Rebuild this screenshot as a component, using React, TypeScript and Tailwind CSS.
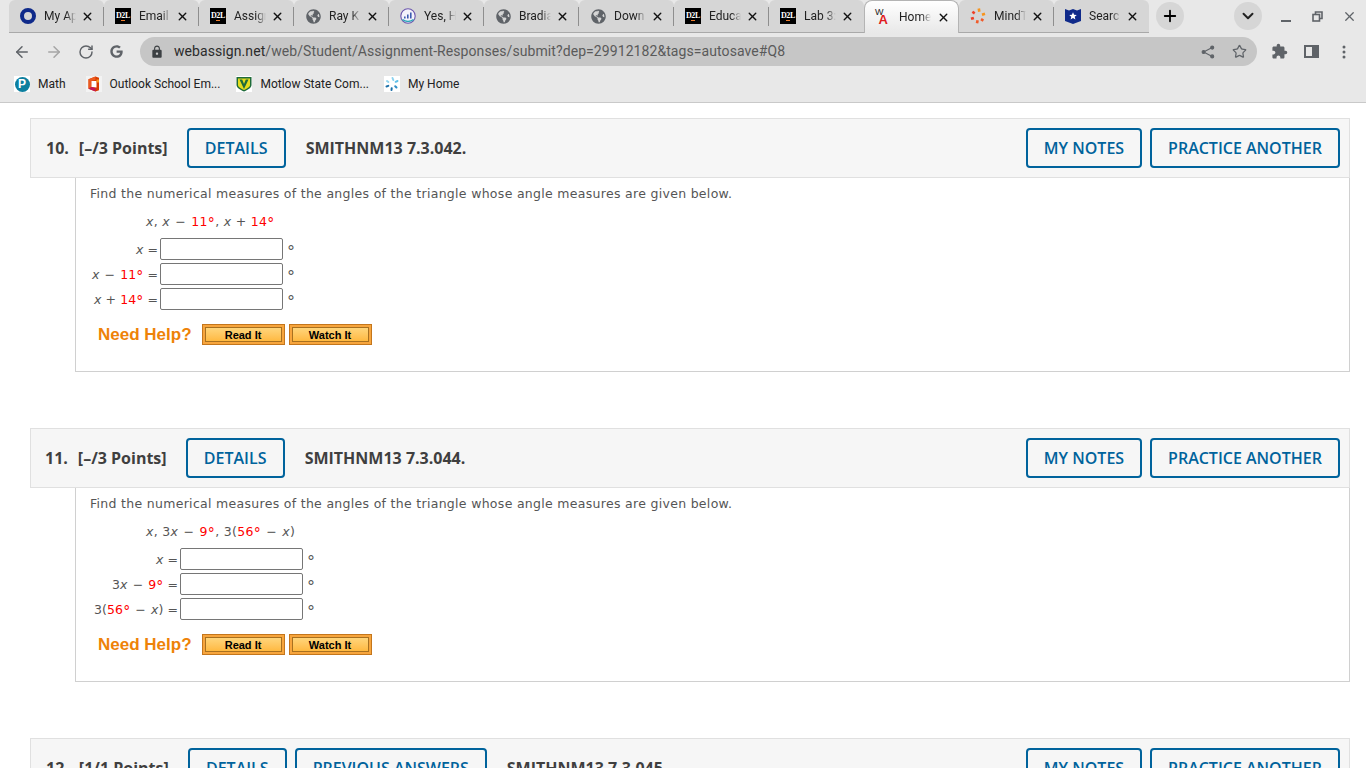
import React from "react";
import { ArrowLeft, ArrowRight, RotateCw, Star, X, Plus, ChevronDown } from "lucide-react";
import { MdLock, MdExtension } from "react-icons/md";
import { FaGlobeAmericas, FaGoogle } from "react-icons/fa";

const D2L = () => (
  <span className="flex h-4 w-4 flex-col items-center justify-center bg-black font-['Liberation_Serif',serif] text-[8px] font-bold leading-[8px] tracking-[-0.3px] text-white">
    D2L
    <span className="h-px w-[4px] bg-[#e8792b]" />
  </span>
);
const Globe = () => <FaGlobeAmericas className="h-[15px] w-[15px] text-[#5f6368]" />;
const Ring = () => <span className="h-4 w-4 rounded-full border-[4px] border-[#0f2a8a]" />;
const Chart = () => (
  <svg width="16" height="16" viewBox="0 0 16 16">
    <circle cx="8" cy="8" r="7.2" fill="#f4f2fb" stroke="#6a55ad" strokeWidth="1.1" />
    <path d="M4 10.500V8.500h1.600v2zM7 10.500V6.500h1.600v4zM10 10.500V4.500h1.600v6z" fill="#3c5bb0" />
    <path d="M2.500 11.500c3 2.600 8 2.600 11 0" stroke="#2aa7b8" strokeWidth="1.400" fill="none" />
  </svg>
);
const WA = () => (
  <span className="flex h-4 w-4 items-start font-['Liberation_Sans',sans-serif] leading-none">
    <span className="-mt-[1px] text-[9px] text-[#222]">W</span>
    <span className="-ml-[5px] mt-[4px] text-[13px] font-bold text-[#e01b22]">A</span>
  </span>
);
const Mind = () => (
  <svg width="16" height="16" viewBox="0 0 16 16" fill="none" strokeWidth="2.600" strokeLinecap="butt">
    <path d="M8.800 0.500l.5 3.200" stroke="#f7941d" />
    <path d="M15 5.800l-3 1" stroke="#f7941d" />
    <path d="M13.400 12.600l-2.400-1.500" stroke="#f15a29" />
    <path d="M7 15.200l.6-2.900" stroke="#f15a29" />
    <path d="M1 10.800l2.900-.9" stroke="#ee3f24" />
    <path d="M2.400 3.800l2.300 1.600" stroke="#ee3f24" />
  </svg>
);
const Shield = () => (
  <svg width="16" height="16" viewBox="0 0 16 16">
    <path d="M0 1l4 1.400L8 1l4 1.400L16 1v12l-8 3-8-3z" fill="#0f2a8a" />
    <path d="M8 4.200l1.100 2.500 2.700.2-2.100 1.800.7 2.700L8 9.900 5.600 11.400l.7-2.700-2.100-1.800 2.700-.2z" fill="#fff" />
  </svg>
);

const tabs: { t: string; i: React.ReactNode }[] = [
  { t: "My App", i: <Ring /> },
  { t: "Email", i: <D2L /> },
  { t: "Assign", i: <D2L /> },
  { t: "Ray K", i: <Globe /> },
  { t: "Yes, H", i: <Chart /> },
  { t: "Bradia", i: <Globe /> },
  { t: "Down", i: <Globe /> },
  { t: "Educa", i: <D2L /> },
  { t: "Lab 3:", i: <D2L /> },
  { t: "Home", i: <WA /> },
  { t: "MindT", i: <Mind /> },
  { t: "Searc", i: <Shield /> },
];

function Tab({ t, i, active, sep }: { t: string; i: React.ReactNode; active: boolean; sep: boolean }) {
  return (
    <div
      className={
        active
          ? "flex h-[33px] w-[95px] shrink-0 items-center rounded-t-[8px] border-x border-t border-[#b4b4b4] bg-gradient-to-b from-white to-[#e8e8e8] pl-[10px]"
          : "flex h-[33px] w-[95px] shrink-0 items-center rounded-t-[6px] border-b border-[#a9a9a9] bg-[#d6d6d6] pl-[11px]"
      }
    >
      <span className="flex h-4 w-4 shrink-0 items-center justify-center">{i}</span>
      <span className="ml-2 w-[32px] shrink-0 overflow-hidden whitespace-nowrap text-[12px] text-[#222] [mask-image:linear-gradient(90deg,#000_70%,transparent)]">
        {t}
      </span>
      <X className={`${active ? "ml-[6px]" : "ml-[5px]"} h-[13px] w-[13px] shrink-0 text-[#111]`} strokeWidth={2.6} />
      {sep && <span className="ml-[9px] h-[19px] w-px shrink-0 bg-[#8e8e8e]" />}
    </div>
  );
}

const Pearson = () => (
  <span className="flex h-4 w-4 items-center justify-center bg-white">
    <span className="flex h-[15px] w-[15px] items-center justify-center rounded-full bg-[#0d7f9f] font-['Liberation_Sans',sans-serif] text-[12px] font-bold leading-none text-white">P</span>
  </span>
);
const Office = () => (
  <svg width="16" height="16" viewBox="0 0 16 16">
    <rect width="16" height="16" fill="#f3f3f3" />
    <path d="M9.500 0.500L2.500 3.200v9.600L9.500 15.500l3.500-1.200V1.700z" fill="#d83b01" />
    <path d="M2.500 3.200L9.500 0.500v3.500L5.500 5v6l-3 1.800z" fill="#eb5a1f" />
    <path d="M5.500 5h5v6.500l-5-.5z" fill="#fff" />
    <path d="M9.500 15.500L2.500 12.800l3-1.800 4 1z" fill="#c2185b" />
    <path d="M10.500 3.500H13v3h-2.500z" fill="#f7931e" />
  </svg>
);
const Motlow = () => (
  <svg width="16" height="16" viewBox="0 0 16 16">
    <rect width="16" height="16" fill="#fff" />
    <path d="M0.500 1h15v8c0 3-4 5-7.500 6.500C4.500 14 0.500 12 0.500 9z" fill="#1f6b3a" />
    <path d="M2 2.500h12v6.500c0 2-3 3.700-6 5-3-1.300-6-3-6-5z" fill="#e4dc1c" />
    <path d="M3.500 3.500h2.700L8 8l1.800-4.500h2.700L8 13z" fill="#1f6b3a" />
  </svg>
);
const MyHome = () => (
  <svg width="16" height="16" viewBox="0 0 16 16" fill="none" strokeWidth="2" strokeLinecap="round">
    <rect width="16" height="16" fill="#fff" />
    <path d="M8.500 2l.8 2" stroke="#8ed3ef" />
    <path d="M13.500 5l-1.800.8" stroke="#5fbfe8" />
    <path d="M12.500 11.500l-1.300-1.300" stroke="#2f8fc8" />
    <path d="M7.500 14l.2-1.800" stroke="#1c6fa8" />
    <path d="M2.500 10.500l1.800-.6" stroke="#1c6fa8" />
    <path d="M3 5l1.400 1" stroke="#8ed3ef" />
  </svg>
);

function Bookmark({ icon, label, cls }: { icon: React.ReactNode; label: string; cls: string }) {
  return (
    <div className={`flex items-center ${cls}`}>
      <span className="flex h-4 w-4 items-center justify-center">{icon}</span>
      <span className="ml-2 whitespace-nowrap text-[12px] text-[#222]">{label}</span>
    </div>
  );
}

const Btn = ({ children, cls = "" }: { children: React.ReactNode; cls?: string }) => (
  <div className={`flex h-10 shrink-0 items-center justify-center rounded-[4px] border-2 border-[#00639c] text-[16px] font-semibold text-[#00639c] ${cls}`}>
    {children}
  </div>
);

const R = ({ children }: { children: React.ReactNode }) => <span className="text-[#f00]">{children}</span>;
const V = () => <i>x</i>;
const D = () => <span className="align-[-2px] text-[14px] leading-[0]">°</span>;
const M = () => <span className="mx-[1px]">−</span>;

function Header({ n, pts, code, prev = false, numCls = "" }: { n: string; pts: string; code: string; prev?: boolean; numCls?: string }) {
  return (
    <div className="flex h-[60px] items-center border border-[#e0e0e0] bg-[#f6f6f6] pl-[15px] pr-[9px] font-['Open_Sans',sans-serif] text-[#3f3f3f]">
      <span className={`-mt-px text-[16px] font-bold ${numCls}`}>{n}</span>
      <span className="ml-[10px] text-[16px] font-bold">{pts}</span>
      <Btn cls="ml-[19px] w-[99px]">DETAILS</Btn>
      {prev && <Btn cls="ml-2 w-[192px]">PREVIOUS ANSWERS</Btn>}
      <span className="ml-5 text-[16px] font-bold">{code}</span>
      <div className="ml-auto flex gap-2">
        <Btn cls="w-[116px]">MY NOTES</Btn>
        <Btn cls="w-[190px]">PRACTICE ANOTHER</Btn>
      </div>
    </div>
  );
}

function HelpBtn({ children }: { children: React.ReactNode }) {
  return (
    <div className="h-[21px] w-[83px] border border-[#c4761c] bg-[#f7a53d] p-[2px]">
      <div className="flex h-[15px] items-center justify-center border border-[#a8701f] bg-gradient-to-b from-[#ffd57a] to-[#ffb93f] pt-px font-['Liberation_Sans',sans-serif] text-[11px] font-bold leading-none text-black">
        {children}
      </div>
    </div>
  );
}

function Question({ head, rows, gridCls }: { head: React.ReactNode; rows: React.ReactNode[]; gridCls: string }) {
  return (
    <div className="ml-[45px] h-[194px] border-x border-b border-[#d0d0d0] pl-[14px] pt-[8px] font-['DejaVu_Sans',sans-serif] text-[12.5px] leading-[16px] tracking-[0.3px] text-[#555]">
      <p>Find the numerical measures of the angles of the triangle whose angle measures are given below.</p>
      <p className="ml-[56px] mt-[12px]">{head}</p>
      <div className={`mt-[8px] grid w-fit grid-cols-[auto_auto_auto] items-center gap-y-[3px] ${gridCls}`}>
        {rows.map((r, i) => (
          <React.Fragment key={i}>
            <span className="whitespace-nowrap pr-[2px] pt-[2px] text-right tracking-[0.1px]">{r}</span>
            <span className="h-[22px] w-[123px] rounded-[2px] border border-[#767676] bg-white" />
            <span className="ml-[4px] mt-[6px] text-[16px] leading-none">°</span>
          </React.Fragment>
        ))}
      </div>
      <div className="ml-[8px] mt-[14px] flex items-center">
        <span className="font-['Liberation_Sans',sans-serif] text-[17px] font-bold tracking-normal text-[#ee8208]">Need Help?</span>
        <span className="ml-[10px] flex gap-1 tracking-normal">
          <HelpBtn>Read It</HelpBtn>
          <HelpBtn>Watch It</HelpBtn>
        </span>
      </div>
    </div>
  );
}

export default function App() {
  return (
    <div className="h-[768px] w-[1366px] overflow-hidden bg-white font-['Roboto',sans-serif]">
      <div className="flex h-[33px] items-stretch bg-[#e8e8e8] pl-[9px]">
        {tabs.map((t, i) => (
          <Tab key={t.t} t={t.t} i={t.i} active={i === 9} sep={i !== 8 && i !== 9 && i !== 11} />
        ))}
        <span className="ml-[7px] mt-[2px] flex h-7 w-7 items-center justify-center rounded-full bg-[#d6d6d6]">
          <Plus className="h-[18px] w-[18px] text-black" strokeWidth={2.4} />
        </span>
        <span className="ml-[50px] mt-[2px] flex h-7 w-7 items-center justify-center rounded-full bg-[#d6d6d6]">
          <ChevronDown className="h-[18px] w-[18px] text-[#222]" strokeWidth={2.6} />
        </span>
        <span className="ml-[19px] mt-[20px] h-[2px] w-[10px] bg-[#5f6368]" />
        <svg className="ml-[21px] mt-[11px]" width="11" height="11" viewBox="0 0 11 11" fill="none" stroke="#5f6368" strokeWidth="1.6">
          <rect x="1" y="3.500" width="6.500" height="6.500" />
          <path d="M3.500 3.500V1h6.500v6.500H7.500" />
        </svg>
        <X className="ml-[19px] mt-[9px] h-[15px] w-[15px] text-[#5f6368]" strokeWidth={2} />
      </div>

      <div className="flex h-[37px] items-center bg-[#e8e8e8]">
        <ArrowLeft className="ml-[13px] h-[18px] w-[18px] text-[#5f6368]" strokeWidth={2} />
        <ArrowRight className="ml-[14px] h-[18px] w-[18px] text-[#a5a5a5]" strokeWidth={2} />
        <RotateCw className="ml-[15px] h-[16px] w-[16px] text-[#5f6368]" strokeWidth={2.2} />
        <FaGoogle className="ml-[16px] h-[13px] w-[13px] text-[#5f6368]" />
        <div className="ml-[17px] flex h-[29px] w-[1117px] items-center rounded-full bg-[#c6c6c6] pl-[10px] pr-[10px]">
          <MdLock className="h-[14px] w-[14px] text-[#3c4043]" />
          <span className="ml-[10px] text-[14px] tracking-[0.08px] text-[#5a5a5a]">
            <span className="text-[#2b2b2b]">webassign.net</span>/web/Student/Assignment-Responses/submit?dep=29912182&amp;tags=autosave#Q8
          </span>
          <svg className="ml-auto" width="14" height="14" viewBox="0 0 14 14" fill="#5f6368" stroke="#5f6368" strokeWidth="1.100">
            <circle cx="11.200" cy="2.600" r="1.500" />
            <circle cx="2.600" cy="7" r="1.500" />
            <circle cx="11.200" cy="11.400" r="1.500" />
            <path d="M11.200 2.600L2.600 7l8.600 4.400" fill="none" />
          </svg>
          <Star className="ml-[17px] h-[15px] w-[15px] text-[#5f6368]" strokeWidth={2} />
        </div>
        <MdExtension className="ml-[14px] h-[17px] w-[17px] text-[#5f6368]" />
        <svg className="ml-[16px]" width="15" height="15" viewBox="0 0 15 15">
          <path fillRule="evenodd" d="M0 1h15v13H0zM2 3v9h6V3z" fill="#5f6368" />
        </svg>
        <svg className="ml-[23px]" width="4" height="14" viewBox="0 0 4 14" fill="#5f6368">
          <circle cx="2" cy="2" r="1.500" />
          <circle cx="2" cy="7" r="1.500" />
          <circle cx="2" cy="12" r="1.500" />
        </svg>
      </div>

      <div className="flex h-[33px] items-center border-b border-[#c9c9c9] bg-[#e8e8e8] pb-[4px] pl-[14px]">
        <Bookmark icon={<Pearson />} label="Math" cls="" />
        <Bookmark icon={<Office />} label="Outlook School Em..." cls="ml-[20px]" />
        <Bookmark icon={<Motlow />} label="Motlow State Com..." cls="ml-[16px]" />
        <Bookmark icon={<MyHome />} label="My Home" cls="ml-[15px]" />
      </div>

      <div className="pl-[30px] pr-[16px] pt-[15px]">
        <Header n="10." pts="[–/3 Points]" code="SMITHNM13 7.3.042." />
        <Question
          gridCls="ml-[2px]"
          head={<><V />, <V /> <M /> <R>11<D /></R>, <V /> + <R>14<D /></R></>}
          rows={[
            <><V /> =</>,
            <><V /> <M /> <R>11<D /></R> =</>,
            <><V /> + <R>14<D /></R> =</>,
          ]}
        />
        <div className="mt-[56px]">
          <Header n="11." pts="[–/3 Points]" code="SMITHNM13 7.3.044." numCls="-ml-px" />
          <Question
            gridCls="ml-[4px]"
            head={<><V />, 3<V /> <M /> <R>9<D /></R>, 3(<R>56<D /></R> <M /> <V />)</>}
            rows={[
              <><V /> =</>,
              <>3<V /> <M /> <R>9<D /></R> =</>,
              <>3(<R>56<D /></R> <M /> <V />) =</>,
            ]}
          />
        </div>
        <div className="mt-[56px]">
          <Header n="12." pts="[1/1 Points]" code="SMITHNM13 7.3.045." prev />
        </div>
      </div>
    </div>
  );
}
